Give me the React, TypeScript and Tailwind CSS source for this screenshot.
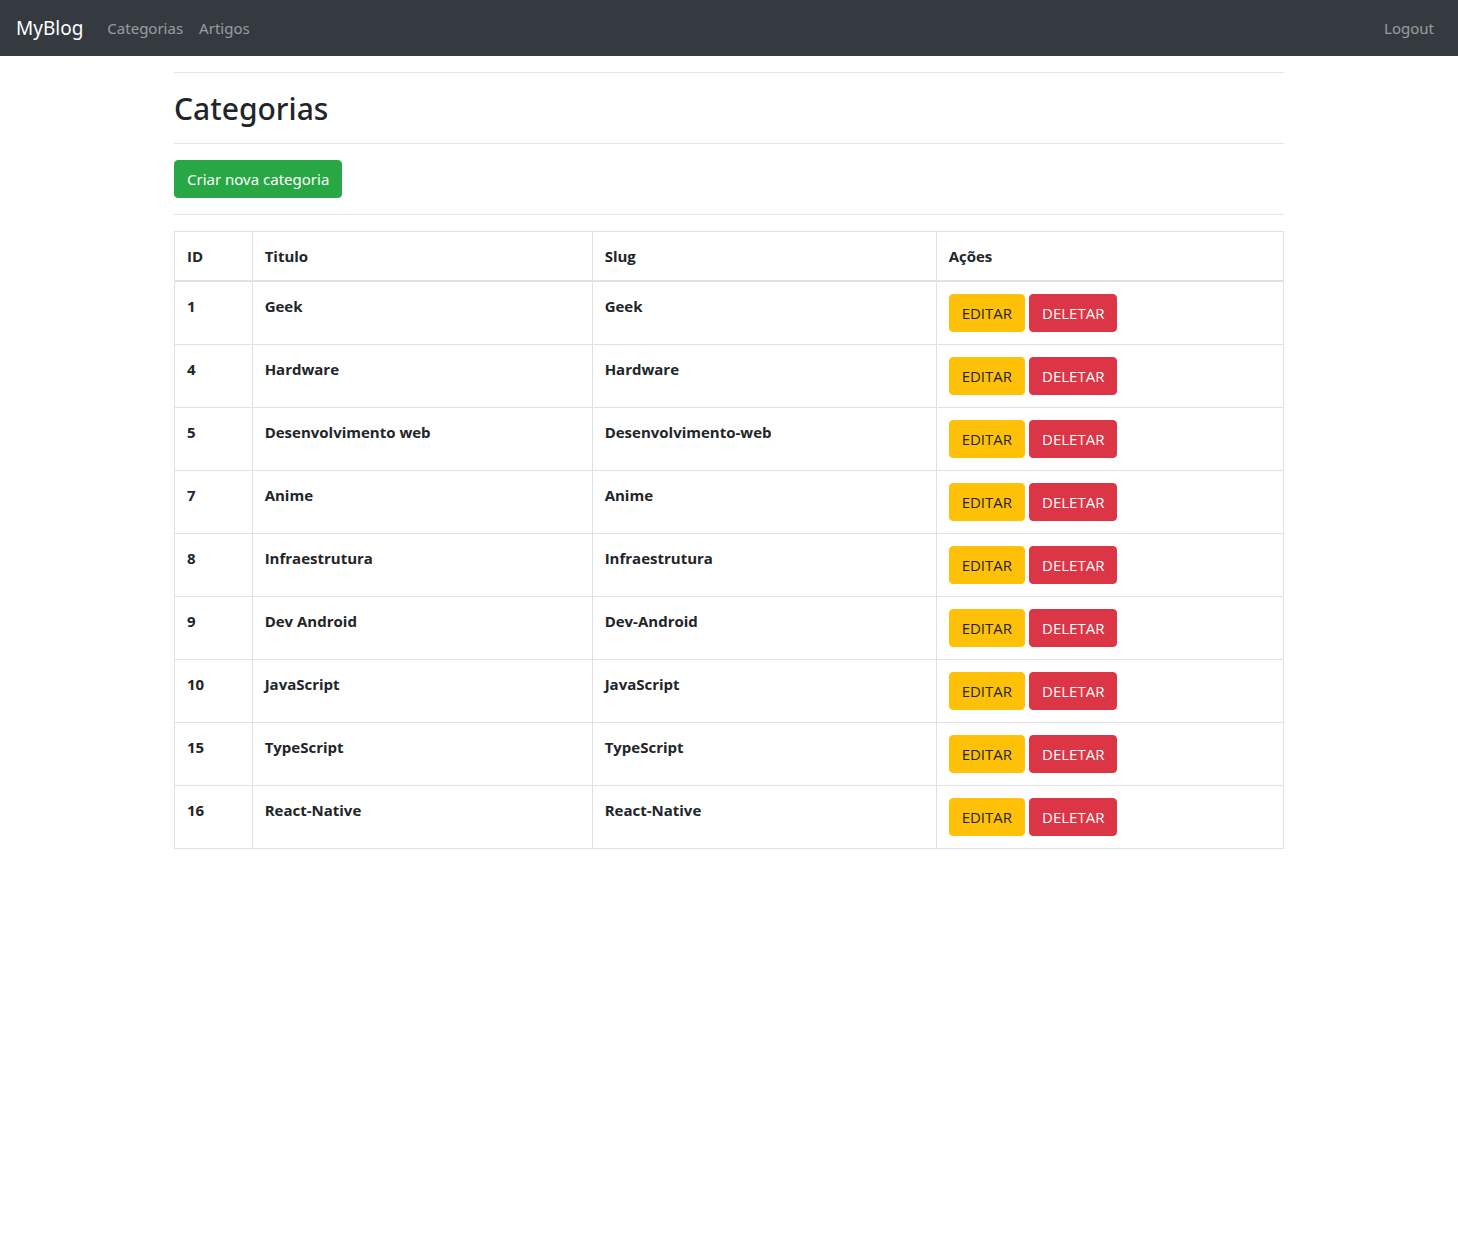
const categories = [
  { id: 1, title: "Geek", slug: "Geek" },
  { id: 4, title: "Hardware", slug: "Hardware" },
  { id: 5, title: "Desenvolvimento web", slug: "Desenvolvimento-web" },
  { id: 7, title: "Anime", slug: "Anime" },
  { id: 8, title: "Infraestrutura", slug: "Infraestrutura" },
  { id: 9, title: "Dev Android", slug: "Dev-Android" },
  { id: 10, title: "JavaScript", slug: "JavaScript" },
  { id: 15, title: "TypeScript", slug: "TypeScript" },
  { id: 16, title: "React-Native", slug: "React-Native" },
];

function Navbar() {
  return (
    <nav className="flex h-14 items-center bg-[#343a40] px-4">
      <a href="#" className="mr-4 text-[19px]/[30px] text-white">
        MyBlog
      </a>
      <a href="#categorias" className="px-2 text-white/50">
        Categorias
      </a>
      <a href="#artigos" className="px-2 text-white/50">
        Artigos
      </a>
      <a href="#logout" className="ml-auto px-2 text-white/50">
        Logout
      </a>
    </nav>
  );
}

function CategoryTable() {
  const cell = "border border-[#dee2e6] p-3 text-left align-top font-bold";
  return (
    <table className="w-full table-fixed border-collapse border border-[#dee2e6] font-['Open_Sans','Noto_Sans',sans-serif]">
      <colgroup>
        <col className="w-[7%]" />
        <col className="w-[340px]" />
        <col className="w-[344px]" />
        <col />
      </colgroup>
      <thead>
        <tr className="border-b-2 border-[#dee2e6]">
          <th scope="col" className={cell}>ID</th>
          <th scope="col" className={cell}>Titulo</th>
          <th scope="col" className={cell}>Slug</th>
          <th scope="col" className={cell}>Ações</th>
        </tr>
      </thead>
      <tbody>
        {categories.map((category) => (
          <tr key={category.id}>
            <th scope="row" className={cell}>{category.id}</th>
            <td className={cell}>{category.title}</td>
            <td className={cell}>{category.slug}</td>
            <td className="border border-[#dee2e6] p-3">
              <div className="flex gap-1">
                <a href="#editar" className="rounded border border-[#ffc107] bg-[#ffc107] px-3 py-1.5 text-[#212529]">
                  EDITAR
                </a>
                <button type="button" className="rounded border border-[#dc3545] bg-[#dc3545] px-3 py-1.5 text-white">
                  DELETAR
                </button>
              </div>
            </td>
          </tr>
        ))}
      </tbody>
    </table>
  );
}

export default function App() {
  return (
    <div className="bg-white font-['Noto_Sans',sans-serif] text-[15px]/[24px] text-[#212529]">
      <Navbar />
      <main className="mx-auto max-w-[1140px] px-[15px]">
        <hr className="my-4 border-black/10" />
        <h2 className="text-[30px]/[40px] font-medium">Categorias</h2>
        <hr className="mt-3.5 mb-4 border-black/10" />
        <a href="#nova" className="inline-block rounded border border-[#28a745] bg-[#28a745] px-3 py-1.5 text-white">
          Criar nova categoria
        </a>
        <hr className="my-4 border-black/10" />
        <CategoryTable />
      </main>
    </div>
  );
}
